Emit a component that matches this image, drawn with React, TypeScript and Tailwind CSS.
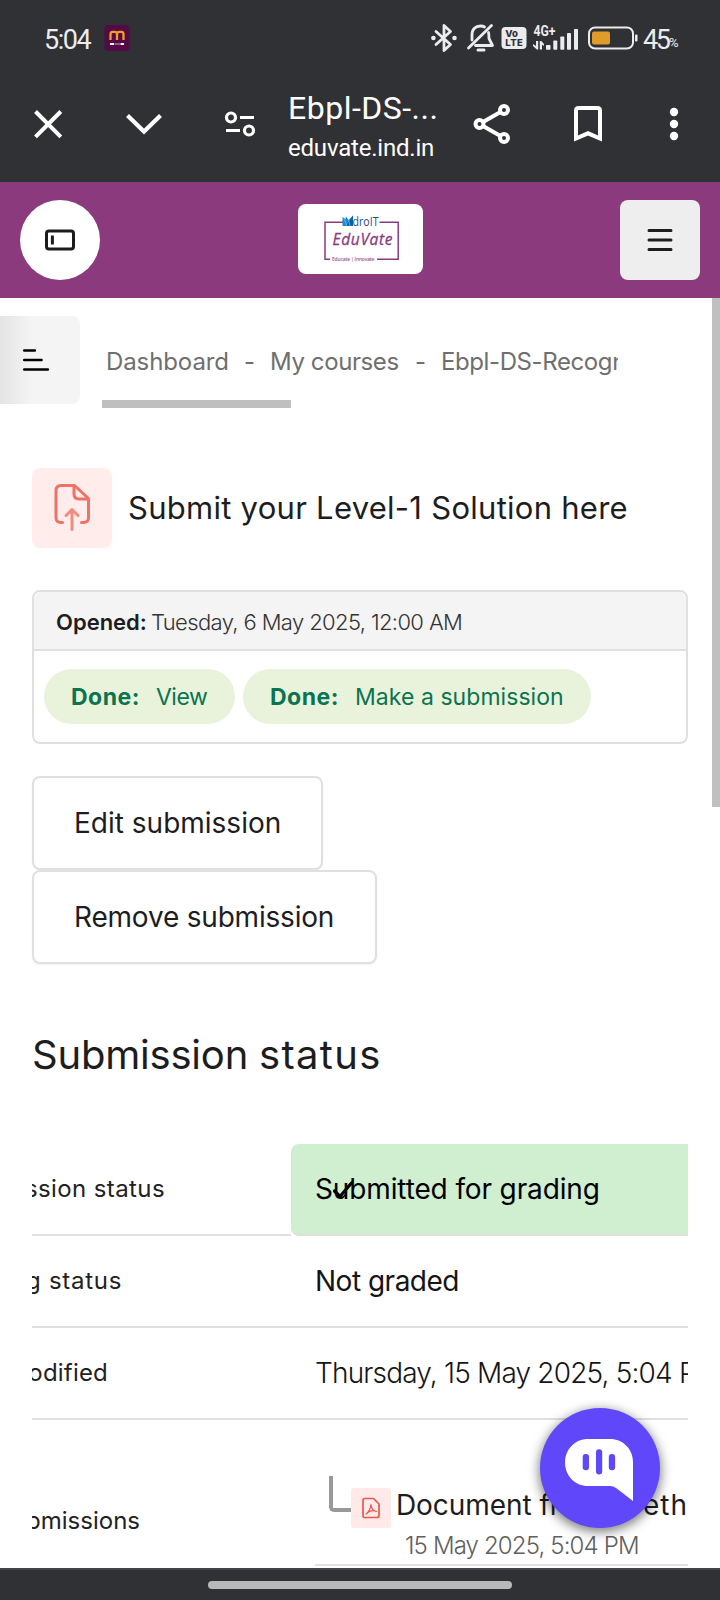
import type { ReactNode } from 'react';

function StatusBar() {
  return (
    <div className="flex h-[76px] shrink-0 items-center bg-[#303135] pl-[44px] font-[Roboto,sans-serif] text-[#ececee]">
      <span className="w-[60px] pt-[3px] text-[27px] leading-[30px] tracking-[-1.5px]">5:04</span>
      <svg className="h-[26px] w-[26px]" viewBox="0 0 26 26" fill="none">
        <rect x="0.5" y="0" width="25" height="26" rx="4" fill="#530a47" />
        <path d="M6.500 15V9Q6.500 6.800 9 6.800H10.500Q13 6.800 13 9V15M13 9Q13 6.800 15.500 6.800H17Q19.500 6.800 19.500 9V15" stroke="#f59a23" strokeWidth="2.300" />
        <path d="M6 19H10M16.500 19H20" stroke="#fff" strokeWidth="1.8" />
        <path d="M10.500 19H16" stroke="#a06b9a" strokeWidth="1.6" />
      </svg>
      <svg className="ml-[300px] h-[30px] w-[28px]" viewBox="0 0 28 30" fill="none" stroke="#ececee" strokeWidth="2.8">
        <path d="M6 8.500L20.500 21.500L14 27.500V2.500L20.500 8.500L6 21.500" strokeLinejoin="round" strokeLinecap="round" />
        <circle cx="3.400" cy="15" r="1.500" strokeWidth="1.600" fill="#ececee" />
        <circle cx="24.500" cy="15" r="1.500" strokeWidth="1.600" fill="#ececee" />
      </svg>
      <svg className="ml-[8px] h-[30px] w-[29px]" viewBox="0 0 29 30" fill="none" stroke="#ececee" strokeWidth="2.800" strokeLinecap="round">
        <path d="M2.500 25L25.500 2.500" />
        <path d="M6 17V12C6 6 9.500 3 14.500 3C16 3 17.500 3.300 18.500 4" />
        <path d="M22.500 9.500C23 11 23 13 23 15.500L26.500 22.500H9.500" strokeLinejoin="round" />
        <path d="M12 27H18" strokeWidth="3" />
      </svg>
      <svg className="ml-[6px] h-[24px] w-[26px]" viewBox="0 0 26 24">
        <rect x="0.500" y="1" width="25" height="22" rx="4" fill="#ececee" />
        <text x="4.300" y="11" fontSize="9.500" fontWeight="800" fontFamily="Inter" fill="#303135" textLength="12.500">Vo</text>
        <text x="4.300" y="20.300" fontSize="9.500" fontWeight="800" fontFamily="Inter" fill="#303135" textLength="17.500">LTE</text>
      </svg>
      <svg className="ml-[5px] h-[28px] w-[48px]" viewBox="0 0 48 28" fill="#ececee">
        <text x="1.500" y="11.500" fontSize="14" fontWeight="700" fontFamily="Roboto" textLength="22" lengthAdjust="spacingAndGlyphs">4G+</text>
        <path d="M1 20L4 22V17H6.200V25.500H4.800L1 22ZM12 22L10 20.500V25.500H7.800V17H9.300L12 20Z" />
        <rect x="14" y="21" width="4.500" height="4.800" rx="0.800" />
        <rect x="21.300" y="16.500" width="4" height="9.300" rx="0.800" />
        <rect x="28.300" y="12.500" width="4" height="13.300" rx="0.800" />
        <rect x="35" y="9" width="4" height="16.800" rx="0.800" />
        <rect x="42" y="5" width="4" height="20.800" rx="0.800" />
      </svg>
      <svg className="ml-[7px] h-[24px] w-[52px]" viewBox="0 0 52 24" fill="none">
        <rect x="2" y="1.500" width="44" height="21" rx="6" stroke="#ececee" strokeWidth="2" />
        <rect x="5" y="5.500" width="18" height="13" rx="2" fill="#e09c29" />
        <rect x="48" y="8.500" width="2.500" height="7" rx="1" fill="#ececee" />
      </svg>
      <span className="ml-[4px] w-[26px] pt-[3px] text-[27px] leading-[30px] tracking-[-2.500px]">45</span>
      <span className="pt-[9px] text-[13px] leading-[20px]">%</span>
    </div>
  );
}

function BrowserBar() {
  return (
    <div className="flex h-[106px] shrink-0 items-center bg-[#303135] pb-[10px] pl-[28px] text-white">
      <svg className="h-10 w-10 shrink-0" viewBox="0 0 40 40" fill="none" stroke="currentColor" strokeWidth="4">
        <path d="M7.500 7.500L32.800 32.800M32.800 7.500L7.500 32.800" />
      </svg>
      <svg className="ml-[56px] h-10 w-10 shrink-0" viewBox="0 0 40 40" fill="none" stroke="currentColor" strokeWidth="4.200">
        <path d="M3.500 11.500L20 27.500L36.500 11.500" />
      </svg>
      <svg className="ml-[56px] h-10 w-10 shrink-0" viewBox="0 0 40 40" fill="none" stroke="currentColor" strokeWidth="3.200">
        <circle cx="11" cy="13.500" r="4.500" />
        <path d="M20 13.500H34M6 26.500H20" />
        <circle cx="29" cy="26.500" r="4.500" />
      </svg>
      <div className="w-[210px] shrink-0 pt-[7px] pl-[28px] font-[Roboto,sans-serif]">
        <div className="text-[32px] leading-10 tracking-[0.500px] whitespace-nowrap">Ebpl-DS-...</div>
        <div className="text-[24px] leading-10 tracking-[-0.2px] whitespace-nowrap">eduvate.ind.in</div>
      </div>
      <svg className="h-[44px] w-[44px] shrink-0" viewBox="0 0 44 44" fill="none" stroke="currentColor" strokeWidth="4">
        <circle cx="9.500" cy="22" r="4" />
        <circle cx="34" cy="8" r="4" />
        <circle cx="34" cy="36" r="4" />
        <path d="M13 20L30.500 10M13 24L30.500 34" />
      </svg>
      <svg className="ml-[54px] h-10 w-10 shrink-0" viewBox="0 0 40 40" fill="none" stroke="currentColor" strokeWidth="4">
        <path d="M8 34.500V6.500Q8 4 10.500 4H29.500Q32 4 32 6.500V34.500L20 29.300Z" />
      </svg>
      <svg className="ml-[46px] h-10 w-10 shrink-0" viewBox="0 0 40 40" fill="currentColor">
        <circle cx="20" cy="8" r="4.200" />
        <circle cx="20" cy="20" r="4.200" />
        <circle cx="20" cy="32" r="4.200" />
      </svg>
    </div>
  );
}

function SiteHeader() {
  return (
    <header className="flex h-[116px] shrink-0 items-center justify-between bg-[#8b3a7d] px-5">
      <button className="flex h-20 w-20 items-center justify-center rounded-full bg-white">
        <svg className="h-[24px] w-[32px]" viewBox="0 0 32 24" fill="none" stroke="#1c1c1e">
          <rect x="2.500" y="3" width="27" height="18" rx="2.500" strokeWidth="3" />
          <path d="M8.400 7.500V16.500" strokeWidth="3" />
        </svg>
      </button>
      <svg className="mb-[2px] h-[70px] w-[125px] rounded-lg bg-white" viewBox="0 0 125 70" fill="none">
        <path d="M45 18.300H27V55.300H32M81.500 18.300H100.200V55.300H79" stroke="#8b3a7d" strokeWidth="1.500" />
        <path d="M44.500 13L47.500 15L48 12.500L50.500 16L55 11.500V22H44.500Z" fill="#168bd2" />
        <path d="M48 22L55 11.500V22Z" fill="#0f5ea8" />
        <path d="M46 14.500L49 22M50.500 16L52 22" stroke="#7cc8f0" strokeWidth="0.700" />
        <text x="54.500" y="21.800" fontSize="12" fontFamily="Open Sans" fill="#2b4a80" textLength="26" lengthAdjust="spacingAndGlyphs">droIT</text>
        <text x="34.500" y="41" fontSize="15.500" fontStyle="italic" fontFamily="Open Sans" fill="#8b3a7d" stroke="#8b3a7d" strokeWidth="0.300" textLength="60">EduVate</text>
        <text x="34" y="56.500" fontSize="5" fontWeight="600" fontFamily="Open Sans" fill="#9a5590" textLength="42.500">Educate | Innovate</text>
      </svg>
      <button className="flex h-20 w-20 items-center justify-center rounded-lg bg-[#eeeeee]">
        <svg className="h-[26px] w-[26px]" viewBox="0 0 26 26" stroke="#1c1c1e" strokeWidth="3" strokeLinecap="round">
          <path d="M2 3.500H24M2 13H24M2 22.500H24" />
        </svg>
      </button>
    </header>
  );
}

function Breadcrumbs() {
  return (
    <nav className="mt-[18px] flex h-[92px] items-start">
      <button className="h-[88px] w-20 rounded-r-lg bg-linear-to-r from-[#e4e4e4] via-[#f4f4f4] via-40% to-[#f4f4f4] pl-[20px]">
        <svg className="h-[28px] w-[32px]" viewBox="0 0 32 28" stroke="#000" strokeWidth="2.700" strokeLinecap="round">
          <path d="M4.300 4.500H14.800M4.300 14H21.500M4.300 23.500H27.800" />
        </svg>
      </button>
      <div className="ml-[22px] w-[516px] overflow-hidden pt-[26px]">
        <div className="flex pl-[4px] text-[24px] leading-10 whitespace-nowrap text-[#6f6f6f]">
          <span className="w-[138px] shrink-0 tracking-[-0.100px]">Dashboard</span>
          <span className="w-[26px] shrink-0">-</span>
          <span className="w-[145px] shrink-0 tracking-[-0.400px]">My courses</span>
          <span className="w-[26px] shrink-0">-</span>
          <span className="shrink-0 tracking-[-0.400px]">Ebpl-DS-Recogn</span>
        </div>
        <div className="mt-[18px] h-2 w-[189px] bg-[#bfbfbf]" />
      </div>
    </nav>
  );
}

function Row({ label, labelBox, children, done = false }: { label: string; labelBox: string; children: ReactNode; done?: boolean }) {
  return (
    <div className="flex h-[92px]">
      <div className="flex w-[259px] shrink-0 items-center border-b-2 border-[#e0e0e0] text-[#222]">
        <div className={'flex justify-end text-[24px] leading-9 whitespace-nowrap ' + labelBox}>{label}</div>
      </div>
      <div
        className={
          done
            ? 'relative flex grow items-center rounded-l-lg border-b-2 border-[#dce2da] bg-[#d0eed0] pl-6 text-[28px] whitespace-nowrap text-black'
            : 'flex grow items-center border-b-2 border-[#e0e0e0] pl-6 text-[28px] whitespace-nowrap text-[#151515]'
        }
      >
        {children}
      </div>
    </div>
  );
}

export default function App() {
  return (
    <div className="relative flex h-[1600px] w-[720px] flex-col overflow-hidden bg-white font-[Inter,sans-serif] text-[#1d1d1f]">
      <StatusBar />
      <BrowserBar />
      <SiteHeader />
      <div className="flex h-[1270px] shrink-0">
        <main className="w-[712px] shrink-0 overflow-hidden">
          <Breadcrumbs />
          <div className="ml-8 w-[656px]">
            <div className="mt-[60px] flex h-20 items-center">
              <div className="flex h-20 w-20 items-center justify-center rounded-lg bg-[#ffeceb]">
                <svg className="mb-[2px] h-[48px] w-[40px]" viewBox="0 0 40 48" fill="none" stroke="#ee7266" strokeWidth="3" strokeLinecap="round" strokeLinejoin="round">
                  <path d="M10.500 39.500H9Q4 39.500 4 34.500V7.500Q4 2.500 9 2.500H22.500L36.500 15.500V34.500Q36.500 39.500 31.500 39.500H29.500" />
                  <path d="M22 3V11Q22 16 27 16H35.500" />
                  <path d="M20 46.500V27M14 32.500L20 26.500L26 32.500" stroke="#f28c80" />
                </svg>
              </div>
              <h1 className="pb-[1px] pl-4 text-[31px] leading-[44px] tracking-[0.270px] whitespace-nowrap">Submit your Level-1 Solution here</h1>
            </div>
            <section className="mt-[42px] h-[154px] overflow-hidden rounded-lg border-2 border-[#e0e0e0]">
              <div className="flex h-[59px] items-center border-b-2 border-[#e0e0e0] bg-[#f4f4f4] pt-[3px] pl-[22px] text-[22px] whitespace-nowrap">
                <span className="w-[95px] font-semibold">Opened:</span>
                <span className="font-light tracking-[-0.620px] text-[#333]">Tuesday, 6 May 2025, 12:00 AM</span>
              </div>
              <div className="flex gap-2 pt-[18px] pl-[10px] text-[23px] whitespace-nowrap text-[#0a7350]">
                <div className="flex h-[55px] w-[191px] items-center rounded-full bg-[#e9f3db] pt-[2px] pl-[27px]">
                  <span className="w-[85px] font-bold tracking-[0.500px]">Done:</span>
                  <span className="tracking-[-0.500px]">View</span>
                </div>
                <div className="flex h-[55px] w-[348px] items-center rounded-full bg-[#e9f3db] pt-[2px] pl-[27px]">
                  <span className="w-[85px] font-bold tracking-[0.500px]">Done:</span>
                  <span className="tracking-[0.050px]">Make a submission</span>
                </div>
              </div>
            </section>
            <div className="mt-8 flex flex-col items-start text-[28px] whitespace-nowrap">
              <button className="h-[94px] w-[291px] rounded-lg border-2 border-[#e0e0e0] bg-white pl-[40px] text-left shadow-xs">Edit submission</button>
              <button className="h-[94px] w-[345px] rounded-lg border-2 border-[#e0e0e0] bg-white pl-[40px] text-left tracking-[-0.200px] shadow-xs">Remove submission</button>
            </div>
            <h2 className="mt-[66px] flex gap-[11px] text-[40px] leading-[50px] whitespace-nowrap">
              <span className="tracking-[-0.200px]">Submission</span>
              <span className="tracking-[1.300px]">status</span>
            </h2>
            <div className="mt-[64px] overflow-hidden">
              <Row label="Submission status" labelBox="w-[133px] tracking-[0.400px]" done>
                <span className="tracking-[-0.130px]">Submitted for grading</span>
                <svg className="absolute top-[34px] left-[40px] h-[24px] w-[24px]" viewBox="0 0 24 24" fill="none" stroke="#000" strokeWidth="3.200" strokeLinecap="round" strokeLinejoin="round">
                  <path d="M3.500 13L9 18.500L20.500 5" />
                </svg>
              </Row>
              <Row label="Grading status" labelBox="w-[90px] tracking-[0.700px]">
                <span className="tracking-[-0.500px]">Not graded</span>
              </Row>
              <Row label="Last modified" labelBox="w-[76px] tracking-[0.200px]">
                <span className="font-light tracking-[-0.820px]">Thursday, 15 May 2025, 5:04 PM</span>
              </Row>
              <div className="flex h-[148px]">
                <div className="w-[259px] shrink-0 pt-[83px] text-[#222]">
                  <div className="flex w-[108px] justify-end text-[24px] leading-9 whitespace-nowrap">File submissions</div>
                </div>
                <div className="ml-6 h-[146px] w-[373px] shrink-0 overflow-hidden border-b-2 border-[#e0e0e0] pt-[56px] whitespace-nowrap">
                  <div className="flex items-start">
                    <div className="ml-[14px] h-[36px] w-[22px] rounded-bl-[5px] border-b-4 border-l-4 border-[#999]" />
                    <div className="mt-3 flex h-10 w-10 shrink-0 items-center justify-center rounded-[3px] bg-[#ffeae9]">
                      <svg className="h-[22px] w-[20px]" viewBox="0 0 20 22" fill="none" stroke="#e8584f" strokeWidth="1.700" strokeLinejoin="round">
                        <path d="M3.500 1.500H12.500L18 7V18.500Q18 20.500 16 20.500H3.500Q2 20.500 2 19V3Q2 1.500 3.500 1.500Z" />
                        <path d="M5 17C7.500 15.500 9.800 11 10 7.500C10.300 11 12 14 15.500 14.500C12 13 8 14 5 17Z" strokeWidth="1.200" />
                      </svg>
                    </div>
                    <span className="mt-[9px] ml-[5px] w-[247px] shrink-0 text-[28px] leading-10 tracking-[-0.060px]">Document fr</span>
                    <span className="mt-[9px] text-[28px] leading-10 tracking-[1px]">eth</span>
                  </div>
                  <div className="pl-[90px] text-[24px] leading-9 font-light tracking-[-0.850px] text-[#606060]">15 May 2025, 5:04 PM</div>
                </div>
              </div>
            </div>
          </div>
        </main>
        <div className="h-[509px] w-2 bg-[#c0c0c0]" />
      </div>
      <div className="flex h-8 shrink-0 items-center justify-center border-t-2 border-[#42464c] bg-[#303135]">
        <div className="h-2 w-[304px] rounded-full bg-[#b8b9b9]" />
      </div>
      <button className="absolute top-[1408px] left-[540px] h-[120px] w-[120px] rounded-full bg-[#6047fa] shadow-[0_3px_11px_1px_rgba(0,0,0,0.5)]">
        <svg className="h-[120px] w-[120px]" viewBox="0 0 120 120">
          <path d="M48 31H70C83 31 93 41 93 54V93L76 80Q73.500 78 70 78H48C35 78 25 67.500 25 54.500S35 31 48 31Z" fill="#fff" />
          <g fill="#6047fa">
            <rect x="42.700" y="46" width="6.300" height="16.300" rx="3" />
            <rect x="56" y="41.300" width="6.200" height="25.200" rx="3" />
            <rect x="68.800" y="46" width="6.300" height="16.300" rx="3" />
          </g>
        </svg>
      </button>
    </div>
  );
}
